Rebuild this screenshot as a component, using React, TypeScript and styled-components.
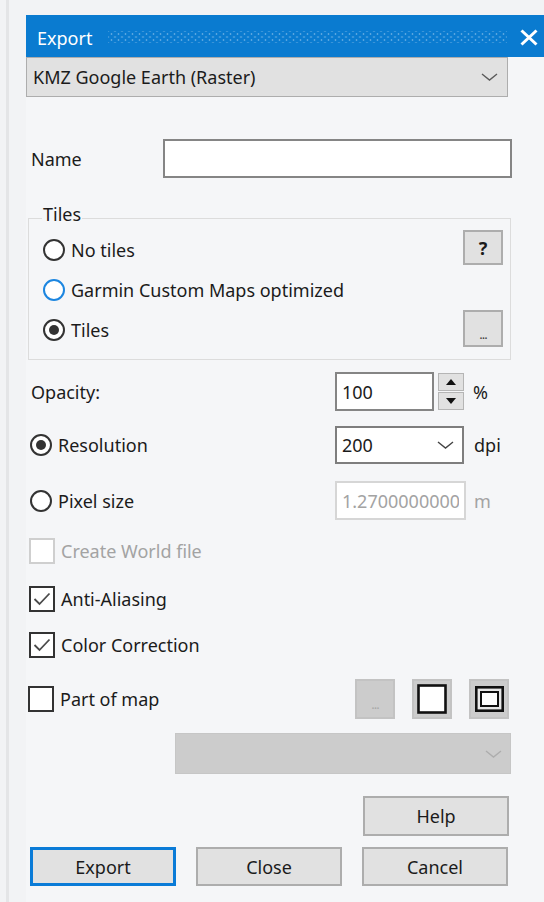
import React from 'react';
import styled, { createGlobalStyle, css } from 'styled-components';

const GlobalStyle = createGlobalStyle`
  html, body { margin: 0; padding: 0; background: #f2f3f5; }
  body {
    font-family: "Noto Sans", "Open Sans", sans-serif;
    font-size: 18px;
    color: #1b1b1b;
  }
  * { box-sizing: border-box; }
`;

const Page = styled.div`
  display: flex;
  min-height: 902px;
  padding-left: 6px;
`;

const Rail = styled.div`
  flex: none;
  width: 3px;
  background: #e4e5e7;
`;

const Dialog = styled.div`
  flex: 1;
  margin: 15px 0 0 17px;
  display: flex;
  flex-direction: column;
  background: #f5f6f8;
`;

const TitleBar = styled.div`
  height: 42px;
  background: #0a7bd0;
  display: flex;
  align-items: center;
  padding-left: 11px;
  color: #fff;
`;

const TitleText = styled.span`
  font-size: 18px;
  line-height: 1;
  padding-top: 3px;
`;

const Grip = styled.div`
  flex: 1;
  height: 12px;
  margin: 2px 13px 0 16px;
  background-image:
    radial-gradient(circle, rgba(255, 255, 255, 0.32) 0.8px, transparent 1.2px),
    radial-gradient(circle, rgba(255, 255, 255, 0.32) 0.8px, transparent 1.2px);
  background-size: 7px 6px;
  background-position: 0 0, 3.5px 3px;
`;

const CloseGlyph = styled.svg`
  flex: none;
  width: 18px;
  height: 17px;
  margin-right: 6px;
  margin-top: 2px;
`;

const FormatCombo = styled.div`
  width: 482px;
  height: 40px;
  background: #e1e1e1;
  border: 1px solid #adadad;
  display: flex;
  align-items: center;
  padding: 0 9px 0 6px;
`;

const ComboText = styled.span`
  flex: 1;
  white-space: nowrap;
  overflow: hidden;
  color: #1b1b1b;
`;

const Chevron = ({ color = '#5a5a5a' }: { color?: string }) => (
  <svg width="17" height="8" viewBox="0 0 17 8" style={{ flex: 'none' }}>
    <path d="M1 1 L8.5 7 L16 1" fill="none" stroke={color} strokeWidth="1.4" />
  </svg>
);

const NameRow = styled.div`
  display: grid;
  grid-template-columns: 137px 349px;
  align-items: center;
  margin-top: 42px;
  height: 39px;
`;

const Label = styled.span<{ $indent?: number; $disabled?: boolean }>`
  padding-left: ${p => p.$indent ?? 5}px;
  white-space: nowrap;
  color: ${p => (p.$disabled ? '#a3a3a3' : '#1b1b1b')};
`;

const TextBox = styled.div<{ $w?: number }>`
  height: 39px;
  width: ${p => (p.$w ? `${p.$w}px` : '100%')};
  background: #fff;
  border: 2px solid #858585;
  display: flex;
  align-items: center;
  padding: 0 5px;
  overflow: hidden;
  white-space: nowrap;
  color: #1b1b1b;
`;

const DisabledInput = styled.input`
  height: 39px;
  width: 131px;
  margin: 0;
  background: #fff;
  border: 2px solid #d6d6d6;
  padding: 0 5px;
  font-family: inherit;
  font-size: 18px;
  color: #a3a3a3;
  -webkit-text-fill-color: #a3a3a3;
  opacity: 1;
`;

const GroupBox = styled.div`
  margin: 40px 0 0 2px;
  width: 483px;
  border: 1px solid #dcdcdc;
  padding: 0 7px 9px 14px;
`;

const Caption = styled.span`
  display: block;
  width: fit-content;
  margin: -15px 0 0 -1px;
  padding: 0 1px;
  height: 20px;
  line-height: 20px;
  background: #f5f6f8;
`;

const GroupGrid = styled.div`
  margin-top: 6px;
  display: grid;
  grid-template-columns: 1fr 40px;
  grid-auto-rows: 40px;
  align-items: center;
`;

const Option = styled.label<{ $indent?: number }>`
  display: flex;
  align-items: center;
  gap: 6px;
  padding-left: ${p => p.$indent ?? 0}px;
  white-space: nowrap;
`;

const RadioDot = styled.span<{ $checked?: boolean; $focus?: boolean }>`
  flex: none;
  width: 22px;
  height: 22px;
  border-radius: 50%;
  background: #fff;
  border: 2px solid ${p => (p.$focus ? '#1c86e0' : '#333')};
  display: flex;
  align-items: center;
  justify-content: center;
  ${p =>
    p.$checked &&
    css`
      &::after {
        content: '';
        width: 10px;
        height: 10px;
        border-radius: 50%;
        background: #333;
      }
    `}
`;

const CheckBox = styled.span<{ $disabled?: boolean }>`
  flex: none;
  width: 26px;
  height: 26px;
  background: #fff;
  border: 2px solid ${p => (p.$disabled ? '#cfcfcf' : '#333')};
  display: flex;
  align-items: center;
  justify-content: center;
`;

const Tick = () => (
  <svg width="18" height="14" viewBox="0 0 18 14">
    <path d="M1.5 7 L6.5 12 L16.5 1.5" fill="none" stroke="#4a4a4a" strokeWidth="1.8" />
  </svg>
);

const SmallButton = styled.button<{ $h?: number; $disabled?: boolean; $align?: string }>`
  width: 40px;
  height: ${p => p.$h ?? 40}px;
  align-self: ${p => p.$align ?? 'center'};
  justify-self: end;
  padding: 0;
  background: ${p => (p.$disabled ? '#cccccc' : '#e1e1e1')};
  border: 2px solid ${p => (p.$disabled ? '#c3c3c3' : '#adadad')};
  font-family: inherit;
  font-size: 18px;
  font-weight: 700;
  color: ${p => (p.$disabled ? '#a8a8a8' : '#1b1b1b')};
  display: flex;
  align-items: center;
  justify-content: center;
`;

const Ellipsis = styled.span<{ $muted?: boolean }>`
  font-size: 13px;
  font-weight: 400;
  letter-spacing: -1px;
  padding-top: 10px;
  color: ${p => (p.$muted ? '#a8a8a8' : '#444')};
`;

const FieldRow = styled.div<{ $top: number; $h: number }>`
  display: grid;
  grid-template-columns: 309px auto auto 1fr;
  align-items: center;
  margin-top: ${p => p.$top}px;
  height: ${p => p.$h}px;
`;

const Unit = styled.span<{ $gap: number; $muted?: boolean }>`
  padding-left: ${p => p.$gap}px;
  color: ${p => (p.$muted ? '#a3a3a3' : '#1b1b1b')};
`;

const Spin = styled.div`
  margin-left: 4px;
  width: 26px;
  height: 37px;
  display: grid;
  grid-template-rows: 1fr 1fr;
  gap: 1px;
`;

const SpinHalf = styled.span`
  background: #e1e1e1;
  border: 1px solid #b5b5b5;
  display: flex;
  align-items: center;
  justify-content: center;
`;

const DropBox = styled.div<{ $w: number; $disabled?: boolean }>`
  width: ${p => p.$w}px;
  height: 100%;
  background: ${p => (p.$disabled ? '#cccccc' : '#fff')};
  border: ${p => (p.$disabled ? '1px solid #c6c6c6' : '2px solid #7e7e7e')};
  display: flex;
  align-items: center;
  padding: 0 8px 0 5px;
`;

const CheckRow = styled.div<{ $top: number; $h?: number }>`
  display: flex;
  align-items: center;
  margin-top: ${p => p.$top}px;
  height: ${p => p.$h ?? 26}px;
  padding-right: 35px;
`;

const ToolGroup = styled.div`
  margin-left: auto;
  display: flex;
  gap: 17px;
`;

const DisabledCombo = styled(DropBox)`
  margin: 14px 0 0 149px;
  height: 41px;
`;

const PushButton = styled.button<{ $default?: boolean }>`
  height: 100%;
  width: 146px;
  padding: 0;
  background: #e1e1e1;
  border: ${p => (p.$default ? '3px solid #0a7bd7' : '2px solid #adadad')};
  font-family: inherit;
  font-size: 18px;
  color: #1b1b1b;
`;

const HelpRow = styled.div`
  margin: 22px 0 0 337px;
  height: 40px;
  display: flex;
`;

const ButtonRow = styled.div`
  margin-top: 11px;
  height: 39px;
  padding-left: 4px;
  display: grid;
  grid-template-columns: repeat(3, 146px);
  column-gap: 20px;
`;

const Triangle = ({ up }: { up?: boolean }) => (
  <svg width="10" height="6" viewBox="0 0 10 6">
    <path d={up ? 'M0 6 L5 0 L10 6 Z' : 'M0 0 L5 6 L10 0 Z'} fill="#111" />
  </svg>
);

export default function App() {
  return (
    <>
      <GlobalStyle />
      <Page>
        <Rail />
        <Dialog>
          <TitleBar>
            <TitleText>Export</TitleText>
            <Grip />
            <CloseGlyph viewBox="0 0 18 17">
              <path d="M1.5 1.5 L16.5 15.5 M16.5 1.5 L1.5 15.5" stroke="#fff" strokeWidth="3" />
            </CloseGlyph>
          </TitleBar>

          <FormatCombo>
            <ComboText>KMZ Google Earth (Raster)</ComboText>
            <Chevron />
          </FormatCombo>

          <NameRow>
            <Label>Name</Label>
            <TextBox />
          </NameRow>

          <GroupBox>
            <Caption>Tiles</Caption>
            <GroupGrid>
              <Option>
                <RadioDot />
                No tiles
              </Option>
              <SmallButton $h={35} $align="start">?</SmallButton>
              <Option>
                <RadioDot $focus />
                Garmin Custom Maps optimized
              </Option>
              <span />
              <Option>
                <RadioDot $checked />
                Tiles
              </Option>
              <SmallButton $h={37} $align="start">
                <Ellipsis>...</Ellipsis>
              </SmallButton>
            </GroupGrid>
          </GroupBox>

          <FieldRow $top={12} $h={39}>
            <Label>Opacity:</Label>
            <TextBox $w={99}>100</TextBox>
            <Spin>
              <SpinHalf>
                <Triangle up />
              </SpinHalf>
              <SpinHalf>
                <Triangle />
              </SpinHalf>
            </Spin>
            <Unit $gap={9}>%</Unit>
          </FieldRow>

          <FieldRow $top={15} $h={38}>
            <Option $indent={4}>
              <RadioDot $checked />
              Resolution
            </Option>
            <DropBox $w={129}>
              <ComboText>200</ComboText>
              <Chevron color="#444" />
            </DropBox>
            <span />
            <Unit $gap={10}>dpi</Unit>
          </FieldRow>

          <FieldRow $top={17} $h={39}>
            <Option $indent={4}>
              <RadioDot />
              Pixel size
            </Option>
            <DisabledInput disabled readOnly value="1.27000000000000" />
            <span />
            <Unit $gap={8} $muted>
              m
            </Unit>
          </FieldRow>

          <CheckRow $top={18}>
            <Option $indent={3}>
              <CheckBox $disabled />
              <Label $indent={0} $disabled>
                Create World file
              </Label>
            </Option>
          </CheckRow>

          <CheckRow $top={22}>
            <Option $indent={3}>
              <CheckBox>
                <Tick />
              </CheckBox>
              Anti-Aliasing
            </Option>
          </CheckRow>

          <CheckRow $top={20}>
            <Option $indent={3}>
              <CheckBox>
                <Tick />
              </CheckBox>
              Color Correction
            </Option>
          </CheckRow>

          <CheckRow $top={21} $h={40}>
            <Option $indent={2}>
              <CheckBox />
              Part of map
            </Option>
            <ToolGroup>
              <SmallButton $disabled>
                <Ellipsis $muted>...</Ellipsis>
              </SmallButton>
              <SmallButton $disabled>
                <svg width="30" height="30" viewBox="0 0 30 30">
                  <rect x="1.5" y="1.5" width="27" height="27" fill="#fff" stroke="#111" strokeWidth="2.6" />
                </svg>
              </SmallButton>
              <SmallButton $disabled>
                <svg width="29" height="26" viewBox="0 0 29 26">
                  <rect x="1.3" y="1.3" width="26.4" height="23.4" fill="#e8e8e8" stroke="#111" strokeWidth="2.6" />
                  <rect x="6" y="6" width="17" height="14" fill="#fff" stroke="#111" strokeWidth="2" />
                </svg>
              </SmallButton>
            </ToolGroup>
          </CheckRow>

          <DisabledCombo $w={336} $disabled>
            <ComboText />
            <Chevron color="#adadad" />
          </DisabledCombo>

          <HelpRow>
            <PushButton>Help</PushButton>
          </HelpRow>

          <ButtonRow>
            <PushButton $default>Export</PushButton>
            <PushButton>Close</PushButton>
            <PushButton>Cancel</PushButton>
          </ButtonRow>
        </Dialog>
      </Page>
    </>
  );
}
